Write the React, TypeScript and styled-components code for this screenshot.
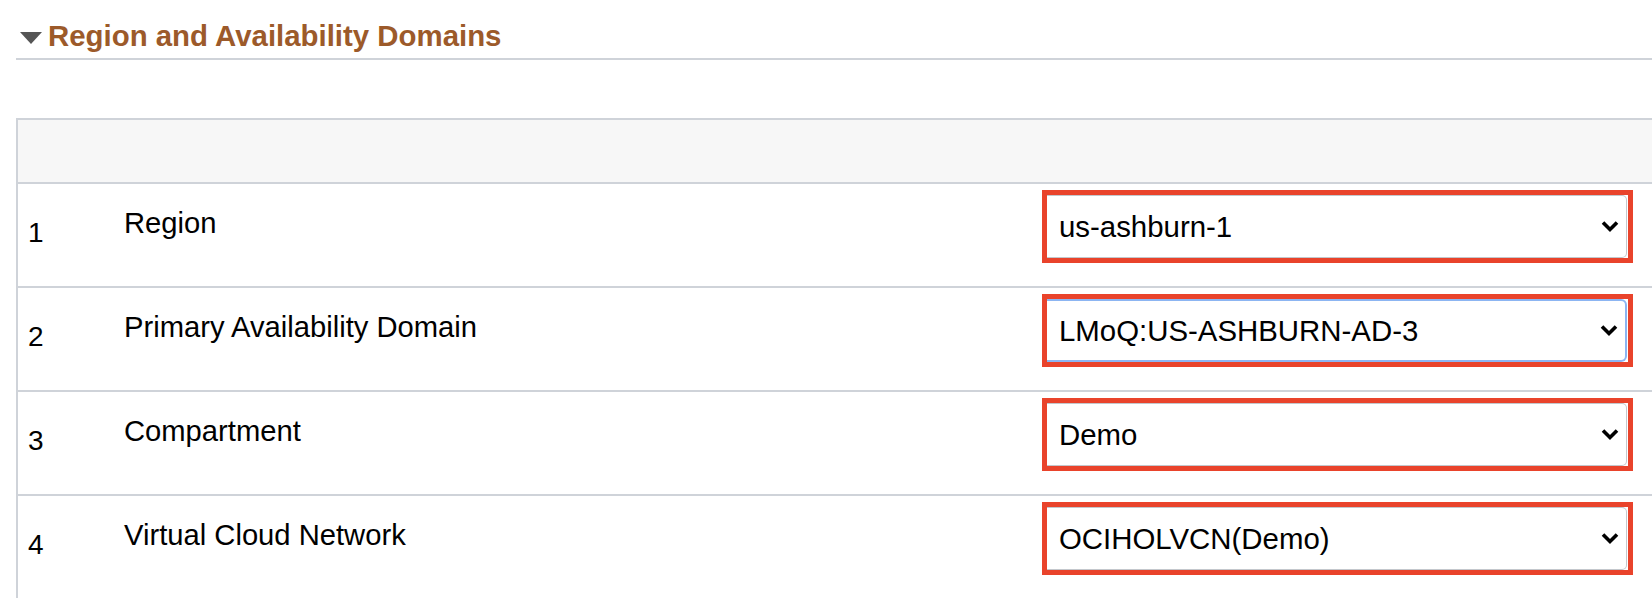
import React from "react";
import styled, { createGlobalStyle, css } from "styled-components";

const GlobalStyle = createGlobalStyle`
  html, body {
    margin: 0;
    padding: 0;
    background: #ffffff;
    overflow: hidden;
  }
  body {
    font-family: "Liberation Sans", Arial, Helvetica, sans-serif;
    color: #000000;
  }
`;

const Page = styled.div`
  padding: 19px 0 0 16px;
  width: 1652px;
  box-sizing: border-box;
`;

const SectionHeader = styled.div`
  display: flex;
  align-items: center;
  padding-bottom: 5px;
  border-bottom: 2px solid #cfd3d9;
`;

const Caret = styled.svg`
  width: 22px;
  height: 12px;
  margin-left: 4px;
  margin-right: 6px;
  margin-top: 3px;
  flex: none;
`;

const Title = styled.h2`
  margin: 0;
  font-size: 29.4px;
  line-height: 34px;
  font-weight: 700;
  color: #9c5a2a;
`;

const Table = styled.div`
  margin-top: 58px;
  border-top: 2px solid #cfd3d9;
  border-left: 2px solid #cfd3d9;
`;

const HeaderRow = styled.div`
  height: 62px;
  background: #f7f7f7;
`;

const Row = styled.div`
  display: grid;
  grid-template-columns: 106px 1fr 610px;
  height: 102px;
  border-top: 2px solid #cfd3d9;
`;

const NumCell = styled.div`
  align-self: center;
  padding-left: 10px;
  padding-bottom: 4px;
  font-size: 28px;
  line-height: 34px;
`;

const LabelCell = styled.div`
  padding-top: 22px;
  font-size: 29.2px;
  line-height: 34px;
`;

const SelectCell = styled.div`
  padding-top: 6px;
  padding-right: 19px;
`;

const RedFrame = styled.div`
  border: 5px solid #e9432b;
  height: 63px;
  overflow: hidden;
`;

const SelectBox = styled.div<{ $focused?: boolean }>`
  box-sizing: border-box;
  height: 63px;
  margin-right: 1px;
  display: flex;
  align-items: center;
  justify-content: space-between;
  padding: 0 7px 0 12px;
  font-size: 29.4px;
  line-height: 34px;
  background: #ffffff;
  border: 1px solid #c3c7cc;
  border-left: none;
  border-radius: 0 5px 5px 0;
  ${(p) =>
    p.$focused &&
    css`
      border: 2px solid #8cb5f2;
      border-left: none;
      border-radius: 0 6px 6px 0;
    `}
`;

const Chevron = styled.svg`
  width: 18px;
  height: 13px;
  flex: none;
`;

type Item = { n: number; label: string; value: string; focused?: boolean };

const items: Item[] = [
  { n: 1, label: "Region", value: "us-ashburn-1" },
  { n: 2, label: "Primary Availability Domain", value: "LMoQ:US-ASHBURN-AD-3", focused: true },
  { n: 3, label: "Compartment", value: "Demo" },
  { n: 4, label: "Virtual Cloud Network", value: "OCIHOLVCN(Demo)" },
];

export default function App() {
  return (
    <>
      <GlobalStyle />
      <Page>
        <SectionHeader>
          <Caret viewBox="0 0 22 12">
            <polygon points="0,0 22,0 11,12" fill="#555555" />
          </Caret>
          <Title>Region and Availability Domains</Title>
        </SectionHeader>
        <Table>
          <HeaderRow />
          {items.map((it) => (
            <Row key={it.n}>
              <NumCell>{it.n}</NumCell>
              <LabelCell>{it.label}</LabelCell>
              <SelectCell>
                <RedFrame>
                  <SelectBox $focused={it.focused}>
                    <span>{it.value}</span>
                    <Chevron viewBox="0 0 18 13">
                      <polyline
                        points="2,2.5 9,9.5 16,2.5"
                        fill="none"
                        stroke="#000"
                        strokeWidth="3.6"
                        strokeLinecap="butt"
                        strokeLinejoin="miter"
                      />
                    </Chevron>
                  </SelectBox>
                </RedFrame>
              </SelectCell>
            </Row>
          ))}
        </Table>
      </Page>
    </>
  );
}
